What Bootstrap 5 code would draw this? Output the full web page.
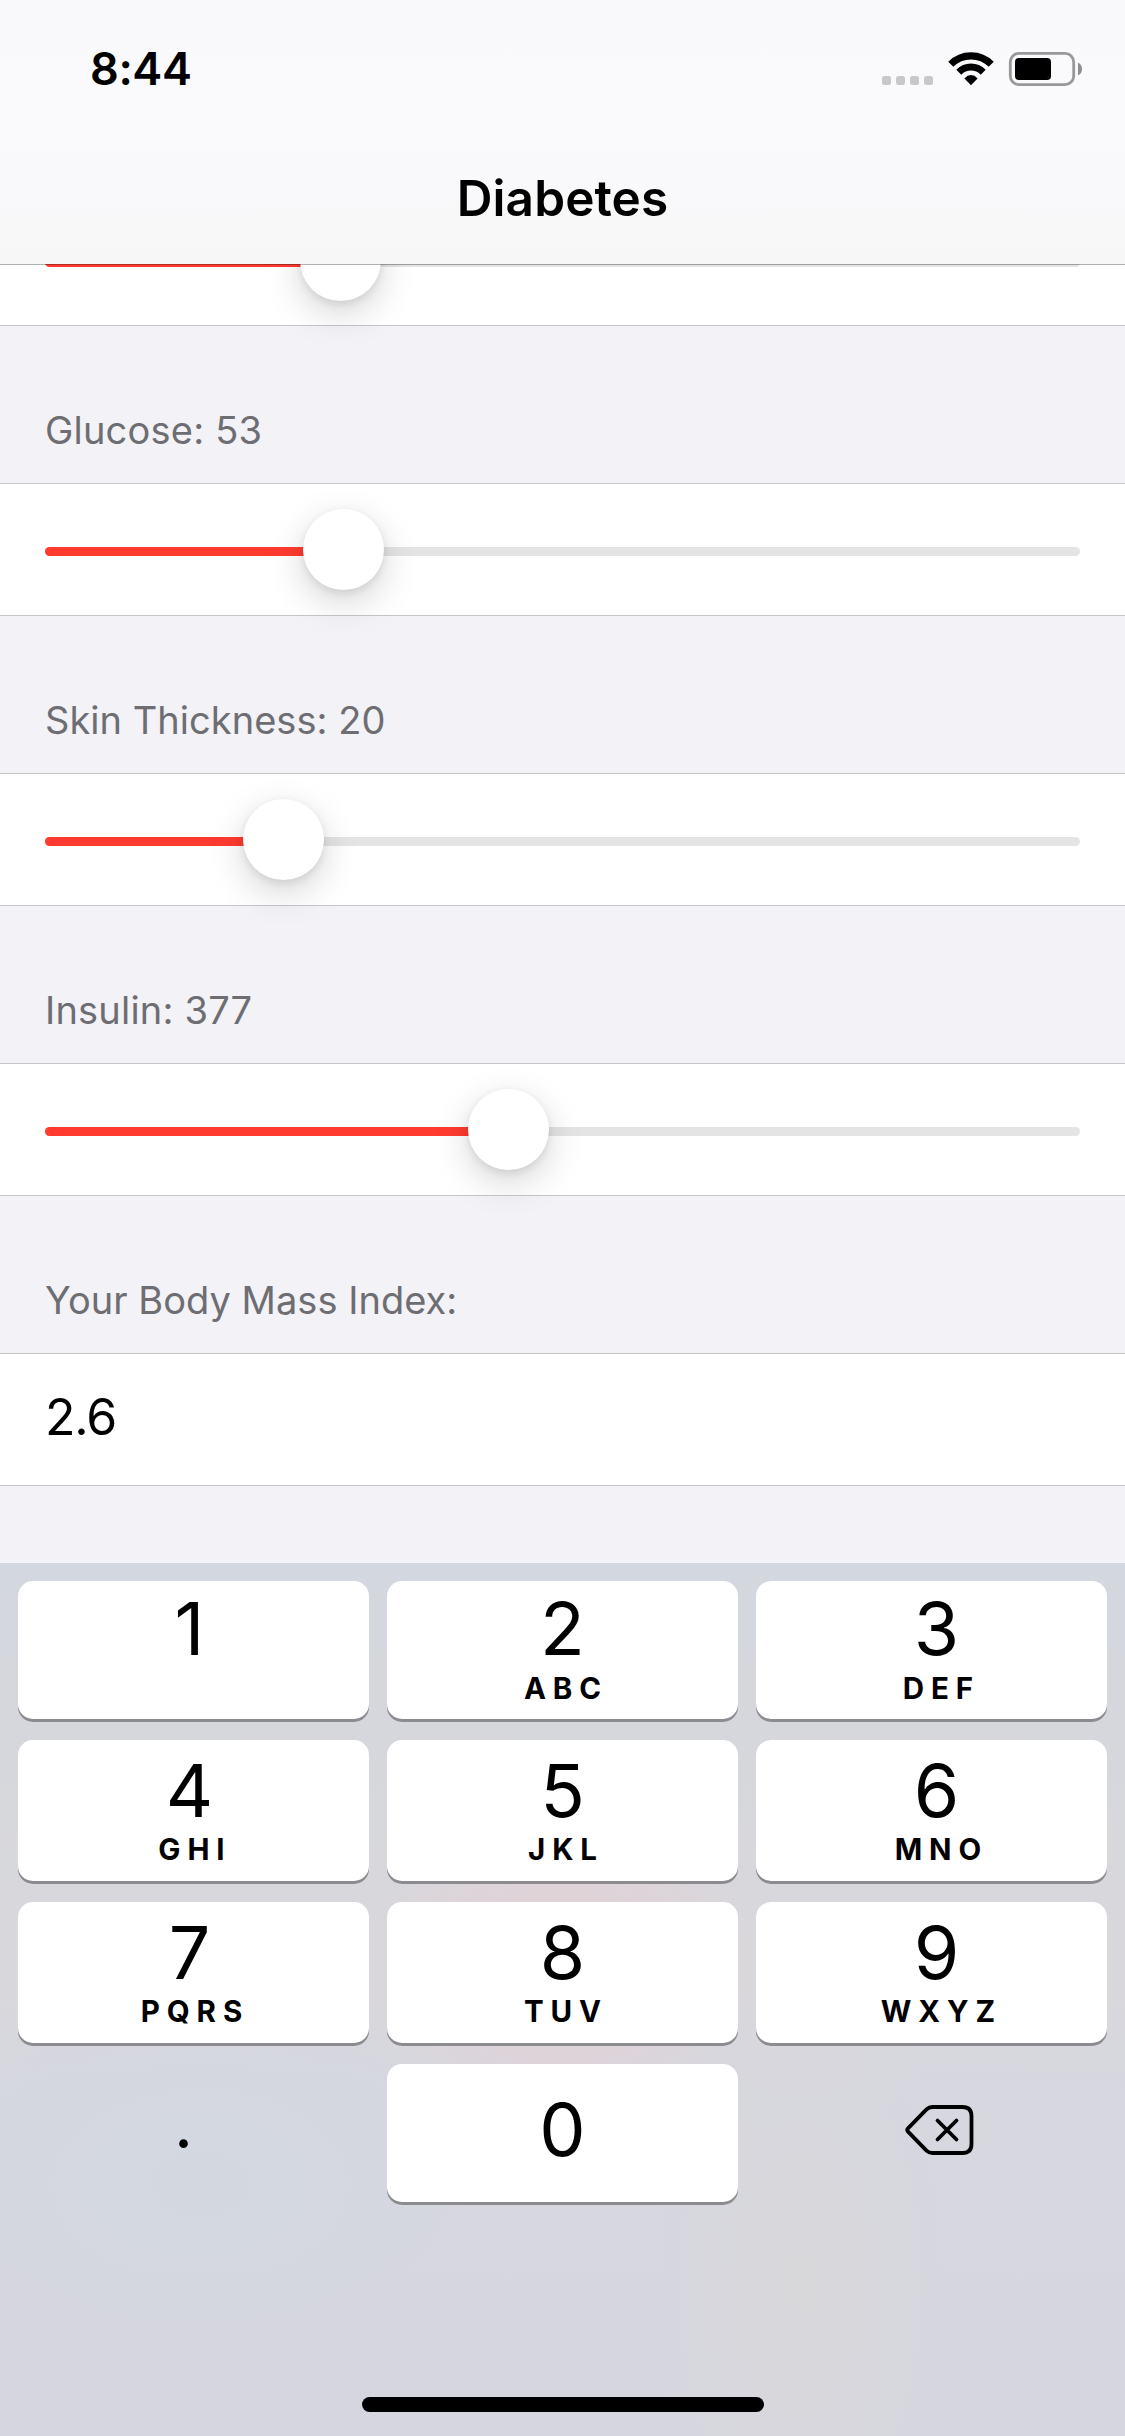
<!DOCTYPE html>
<html lang="en">
<head>
<meta charset="utf-8">
<meta name="viewport" content="width=device-width, initial-scale=1">
<title>Diabetes</title>
<link rel="stylesheet" href="https://cdn.jsdelivr.net/npm/bootstrap@5.3.0/dist/css/bootstrap.min.css">
<style>
body{font-family:Inter,"Liberation Sans",sans-serif;background:#f2f2f7;color:#000;width:1125px;height:2436px;overflow:hidden}
.topbar{height:264px;z-index:2;background:linear-gradient(#f9f9fb 0,#fafafc 40%,#f9f9fb 72%,#f7f7f7 100%)}
.topbar::after{content:"";position:absolute;left:0;right:0;top:100%;height:1px;background:rgba(0,0,0,.3)}
.statusbar{height:132px;padding:46px 42px 0 90px}
.clock{font-size:45px;line-height:46px;font-weight:600;letter-spacing:-.4px}
.page-title{font-size:49.5px;line-height:60px;font-weight:600;letter-spacing:.1px;padding-top:36px}
.form-list{margin-top:-71px;height:1370px}
.cell{height:133px;background:#fff;border-top:1px solid #c6c6c8;border-bottom:1px solid #c6c6c8;padding:0 45px}
.cell-label{height:157px;padding:81px 45px 0;font-size:38px;line-height:46px;color:#6d6d72;letter-spacing:.03px}
.cell-label.short{letter-spacing:.2px}
.slider{padding-top:63px}
.slider .progress{height:9px;border-radius:5px;background:#e4e4e5}
.slider .progress-bar{background:#ff3b30}
.thumb{width:81px;height:81px;top:-38px;background:#fff;box-shadow:0 12px 36px rgba(0,0,0,.17),0 3px 8px rgba(0,0,0,.09)}
.first-slider{padding-top:64px}
.bmi{font-size:50px;line-height:60px;padding-top:33px;letter-spacing:-1.2px}
.keyboard{height:873px;padding:18px 18px 0;position:relative;z-index:1;
 background:radial-gradient(ellipse 210px 160px at 562px 400px,#e1d1d6 0,#dfd3d8 45%,rgba(216,214,220,0) 100%),
 radial-gradient(ellipse 160px 330px at 800px 720px,#d8d8db 0,rgba(215,216,220,0) 100%),
 radial-gradient(ellipse 300px 190px at 200px 620px,#d3d8e0 0,rgba(211,216,224,0) 100%),
 linear-gradient(#d3d7df 0,#d6d7dc 18%,#d8d8dc 48%,#d6d7df 62%,#d6d6df 100%)}
.keypad{display:grid;grid-template-columns:repeat(3,351px);grid-template-rows:138px 141px 141px 138px;column-gap:18px;row-gap:21px}
.keycap{background:#fff;border:0;border-radius:15px;box-shadow:0 3px 0 #8c8c90;padding:0;color:#000;display:flex;flex-direction:column;align-items:center;justify-content:flex-start}
.keycap.plain{background:none;box-shadow:none}
.num{font-size:73.5px;line-height:76px;font-weight:400;padding-top:13px}
.abc{font-size:29.5px;line-height:34px;font-weight:700;letter-spacing:6.9px;margin-right:-6.9px;padding-top:3px}
.top-row .num{padding-top:10px}
.last-row{padding-bottom:6px}
.dotkey{font-size:66px;padding:0 20px 12px 0}
.c1>.abc{transform:translateX(-2px)}
.c1>.num{transform:translateX(-4px)}
.c3>.abc{transform:translateX(6.5px)}
.c3>.num{transform:translateX(5px)}
.c3>svg{transform:translateX(7.5px)}
.home{width:402px;height:15px;border-radius:8px;left:362px;top:834px}
</style>
<script src="https://cdn.jsdelivr.net/npm/bootstrap@5.3.0/dist/js/bootstrap.bundle.min.js"></script>
</head>
<body>
<header class="topbar position-relative">
  <div class="statusbar d-flex justify-content-between align-items-start">
    <span class="clock">8:44</span>
    <svg width="203" height="42" viewBox="880 46 203 42">
      <g fill="#c8c8ca"><rect x="882" y="76" width="9" height="9" rx="2.5"/><rect x="896" y="76" width="9" height="9" rx="2.5"/><rect x="910" y="76" width="9" height="9" rx="2.5"/><rect x="924" y="76" width="9" height="9" rx="2.5"/></g>
      <g fill="none" stroke="#000"><path stroke-width="7.2" d="M950.8 64.3A28.2 28.2 0 0 1 991.2 64.3"/><path stroke-width="7" d="M958.8 72.2A17.2 17.2 0 0 1 983.2 72.2"/></g>
      <path d="M971 85.2L964.4 78.4Q967.4 75 971 75T977.6 78.4Z"/>
      <rect x="1010.3" y="53.4" width="63.4" height="31.2" rx="8.5" fill="none" stroke="#98989a" stroke-width="2.8"/>
      <rect x="1015" y="58" width="36" height="22" rx="4"/>
      <path fill="#8e8e90" d="M1078 62.5Q1082 64.500 1082 69T1078 75.500Z"/>
    </svg>
  </div>
  <h1 class="page-title text-center m-0">Diabetes</h1>
</header>
<main class="form-list">
  <div class="cell slider first-slider"><div class="position-relative"><div class="progress"><div class="progress-bar" style="width:28.5%"></div></div><div class="thumb rounded-circle position-absolute" style="left:255px"></div></div></div>
  <div class="cell-label short">Glucose: 53</div>
  <div class="cell slider"><div class="position-relative"><div class="progress"><div class="progress-bar" style="width:28.7%"></div></div><div class="thumb rounded-circle position-absolute" style="left:258px"></div></div></div>
  <div class="cell-label">Skin Thickness: 20</div>
  <div class="cell slider"><div class="position-relative"><div class="progress"><div class="progress-bar" style="width:23%"></div></div><div class="thumb rounded-circle position-absolute" style="left:198px"></div></div></div>
  <div class="cell-label short">Insulin: 377</div>
  <div class="cell slider"><div class="position-relative"><div class="progress"><div class="progress-bar" style="width:44.8%"></div></div><div class="thumb rounded-circle position-absolute" style="left:423px"></div></div></div>
  <div class="cell-label">Your Body Mass Index:</div>
  <div class="cell bmi">2.6</div>
</main>
<section class="keyboard">
  <div class="keypad">
    <button class="keycap top-row c1"><span class="num">1</span></button>
    <button class="keycap top-row"><span class="num">2</span><span class="abc pt-1">ABC</span></button>
    <button class="keycap top-row c3"><span class="num">3</span><span class="abc pt-1">DEF</span></button>
    <button class="keycap c1"><span class="num">4</span><span class="abc">GHI</span></button>
    <button class="keycap"><span class="num">5</span><span class="abc">JKL</span></button>
    <button class="keycap c3"><span class="num">6</span><span class="abc">MNO</span></button>
    <button class="keycap c1"><span class="num">7</span><span class="abc">PQRS</span></button>
    <button class="keycap"><span class="num">8</span><span class="abc">TUV</span></button>
    <button class="keycap c3"><span class="num">9</span><span class="abc">WXYZ</span></button>
    <button class="keycap plain last-row justify-content-center"><span class="num dotkey">.</span></button>
    <button class="keycap last-row justify-content-center"><span class="num p-0">0</span></button>
    <button class="keycap plain last-row c3 justify-content-center" aria-label="Delete">
      <svg width="70" height="52" viewBox="0 0 70 52" fill="none" stroke="#000" stroke-width="3.8" stroke-linecap="round" stroke-linejoin="round"><path d="M3.500 24.400L22 5.400Q24.500 3 28 3H58Q67 3 67 12V40Q67 49 58 49H28Q24.500 49 22 46.600L3.500 27.600Q2 26 3.500 24.400Z"/><path d="M33 16.500L52 35.500M52 16.500L33 35.500"/></svg>
    </button>
  </div>
  <div class="home bg-black position-absolute"></div>
</section>
</body>
</html>
